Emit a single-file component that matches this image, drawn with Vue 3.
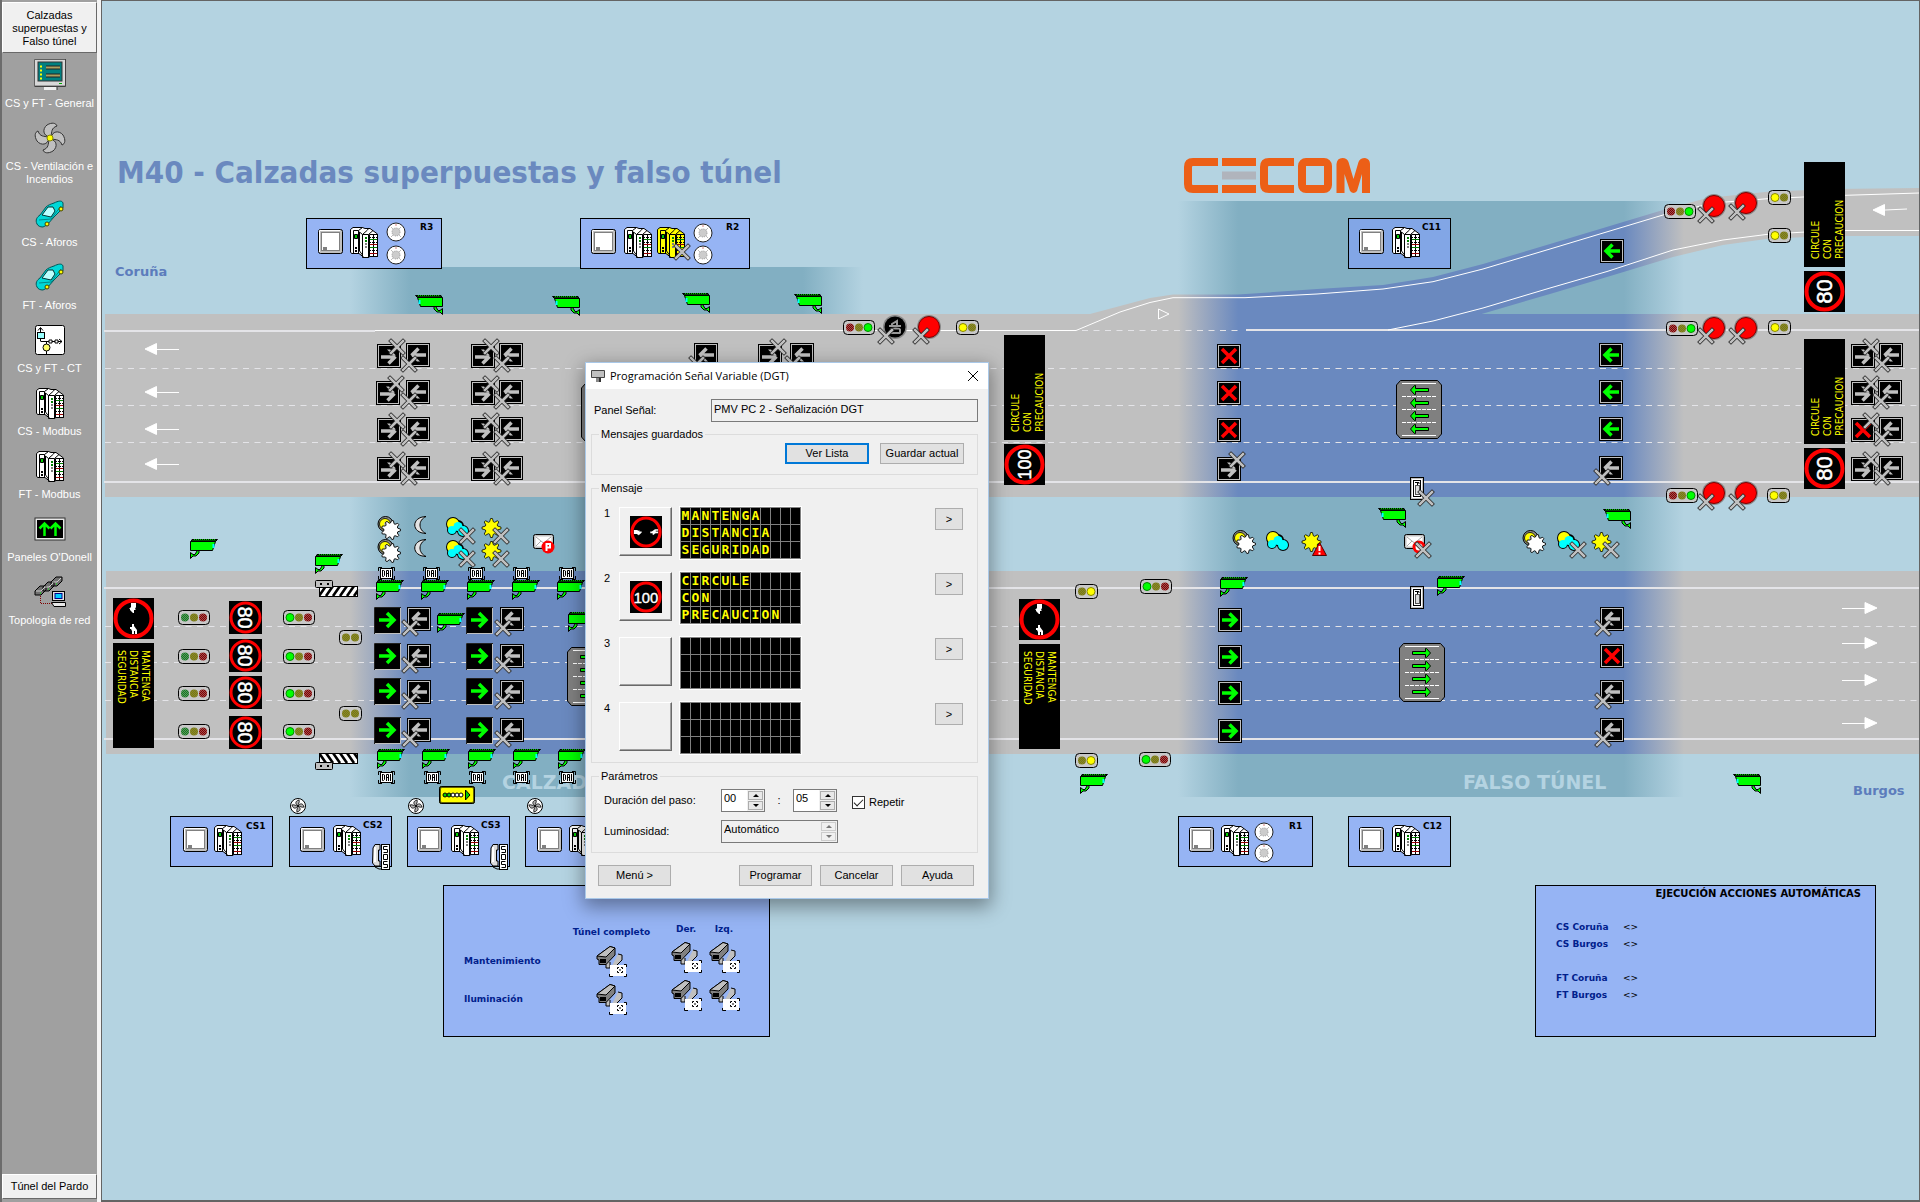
<script setup>
import { ref } from 'vue'

const menu = [
  { icon: 'm-monitor', label: 'CS y FT - General' },
  { icon: 'm-fan', label: 'CS - Ventilación e Incendios' },
  { icon: 'm-car', label: 'CS - Aforos' },
  { icon: 'm-car', label: 'FT - Aforos' },
  { icon: 'm-ct', label: 'CS y FT - CT' },
  { icon: 'm-plc', label: 'CS - Modbus' },
  { icon: 'm-plc', label: 'FT - Modbus' },
  { icon: 'm-arrows', label: "Paneles O'Donell" },
  { icon: 'm-net', label: 'Topología de red' },
]

function star(cx, cy, outer, inner, n) {
  const pts = []
  for (let i = 0; i < n * 4; i++) {
    const r = i % 4 < 2 ? outer : inner
    const a = ((i - 0.5) * Math.PI) / (n * 2)
    pts.push((cx + r * Math.cos(a)).toFixed(1) + ',' + (cy + r * Math.sin(a)).toFixed(1))
  }
  return pts.join(' ')
}

const place = (id, list) => list.map(([x, y]) => ({ id, x, y }))

const boxes = [
  { x: 306, y: 218, w: 135, name: 'R3', tx: 420, ty: 230 },
  { x: 580, y: 218, w: 169, name: 'R2', tx: 726, ty: 230 },
  { x: 1348, y: 218, w: 102, name: 'C11', tx: 1422, ty: 230, fill: '#82a6e6' },
  { x: 1178, y: 816, w: 134, name: 'R1', tx: 1289, ty: 829 },
  { x: 1348, y: 816, w: 102, name: 'C12', tx: 1423, ty: 829 },
  { x: 170, y: 816, w: 102, name: 'CS1', tx: 246, ty: 829 },
  { x: 289, y: 816, w: 102, name: 'CS2', tx: 363, ty: 828 },
  { x: 407, y: 816, w: 102, name: 'CS3', tx: 481, ty: 828 },
  { x: 525, y: 816, w: 102, name: '', tx: 600, ty: 828 },
]

const dashes = [368, 405, 442, 626, 662, 700]
const lines = [482, 588, 739]
const leftArrows = [349, 392, 429, 464]
const rightArrows = [608, 643, 680, 723]

const devices = [
  ...place('cabinet', [[318, 229], [591, 229], [1359, 229], [1189, 827], [1359, 827], [183, 827], [300, 827], [417, 827], [537, 827]]),
  ...place('plc', [[350, 227], [624, 227], [1392, 227], [1221, 825], [1392, 825], [214, 825], [333, 825], [451, 825], [569, 825]]),
  ...place('plc-y', [[657, 227]]),
  ...place('speaker', [[396, 232], [396, 255], [703, 233], [703, 255], [1264, 832], [1264, 853]]),
  ...place('sos', [[372, 844], [490, 844]]),
  ...place('fan', [[298, 806], [416, 806], [535, 806]]),
  ...place('dai', [[378, 567], [423, 567], [468, 567], [513, 567], [559, 567], [378, 771], [424, 771], [469, 771], [513, 771], [559, 771]]),
  ...place('cam-l', [[415, 294], [552, 295], [682, 292], [794, 293], [1378, 507], [1603, 508], [1733, 773]]),
  ...place('cam-r', [[190, 538], [315, 553], [376, 579], [421, 579], [467, 579], [512, 579], [557, 579], [437, 612], [568, 611],
    [377, 748], [422, 748], [468, 748], [513, 748], [558, 748], [1220, 576], [1437, 575], [1080, 773]]),
  ...place('t-gyr', [[178, 610], [178, 649], [178, 686], [178, 724]]),
  ...place('t-Gyr', [[283, 610], [283, 649], [283, 686], [283, 724], [1140, 579], [1139, 752]]),
  ...place('t-ryG', [[843, 320], [1664, 204], [1666, 321], [1666, 488]]),
  ...place('t-yy', [[339, 630], [339, 706]]),
  ...place('t-Yy', [[956, 320], [1768, 190], [1768, 228], [1768, 320], [1767, 488]]),
  ...place('t-yY', [[1075, 584], [1075, 753]]),
  ...place('disc', [[929, 327], [1714, 206], [1746, 203], [1714, 328], [1746, 328], [1714, 493], [1746, 493]]),
  ...place('disc40', [[895, 327]]),
  ...place('off-r', [[377, 344], [376, 381], [377, 418], [377, 457], [471, 344], [471, 381], [471, 418], [471, 457], [758, 344], [1217, 457],
    [1851, 344], [1851, 381], [1851, 457]]),
  ...place('stop', [[1217, 344], [1217, 381], [1217, 418], [1851, 418], [1600, 644]]),
  ...place('off-l', [[406, 343], [406, 380], [406, 417], [406, 456], [499, 343], [499, 380], [499, 417], [499, 456], [694, 343], [790, 343],
    [407, 607], [407, 644], [407, 680], [407, 718], [500, 607], [500, 644], [500, 680], [500, 718],
    [1599, 456], [1879, 343], [1878, 380], [1879, 417], [1879, 456], [1600, 607], [1600, 680], [1600, 718]]),
  ...place('go-l', [[1600, 239], [1599, 343], [1599, 380], [1599, 417]]),
  ...place('go-r', [[1218, 608], [1218, 645], [1218, 681], [1218, 719]]),
  ...place('go-big', [[374, 607], [374, 643], [374, 678], [374, 717], [466, 607], [466, 643], [466, 678], [466, 717]]),
  ...place('lanes-l', [[1396, 380], [581, 383]]),
  ...place('lanes-r', [[1399, 643], [567, 647]]),
  ...place('ext', [[1410, 477], [1410, 586]]),
  ...place('w-cog', [[377, 516], [377, 539], [1232, 530], [1522, 530]]),
  ...place('w-moon', [[414, 516], [414, 539]]),
  ...place('w-cloud', [[446, 517], [446, 540], [1266, 531], [1557, 531]]),
  ...place('w-sun', [[482, 518], [482, 541], [1302, 532], [1592, 532]]),
  ...place('warn', [[1312, 542]]),
  ...place('mail', [[533, 534], [1404, 534]]),
  ...place('mail-p', [[548, 547]]),
  ...place('mail-no', [[1419, 547]]),
  ...place('gate', [[319, 586]]),
  ...place('gate-b', [[319, 753]]),
  ...place('gate-box', [[315, 580], [315, 762]]),
  ...place('queue', [[439, 786]]),
  ...place('cross', [[682, 252], [886, 336], [921, 336], [1706, 215], [1737, 212], [1706, 336], [1737, 336], [1706, 502], [1737, 502],
    [1426, 498], [1423, 550], [1578, 550], [1611, 550], [467, 536], [467, 559], [501, 536], [501, 559], [1871, 421]]),
]

const up = ['CIRCULE', 'CON', 'PRECAUCION']
const down = ['MANTENGA', 'DISTANCIA', 'SEGURIDAD']
const upPanels = [
  { x: 1004, y: 335, speed: '100', size: 18, base: 27 },
  { x: 1804, y: 162, speed: '80', size: 22, base: 28 },
  { x: 1804, y: 339, speed: '80', size: 22, base: 28 },
]
const downPanels = [{ x: 113, y: 598 }, { x: 1019, y: 599 }]
const speeds = [601, 639, 676, 716]

const scenarios = ['Mantenimiento', 'Iluminación']
const actions = [['CS Coruña', 'CS Burgos'], ['FT Coruña', 'FT Burgos']]

const blank = ['', '', '']
const messages = [
  { sign: 'cars', lines: down },
  { sign: '100', lines: up },
  { sign: '', lines: blank },
  { sign: '', lines: blank },
]

const panelName = ref('PMV PC 2 - Señalización DGT')
const minutes = ref('00')
const seconds = ref('05')
const repeat = ref(true)
const brightness = ref('Automático')
</script>

<template>
  <div class="shell">
    <nav class="side">
      <button class="tab">Calzadas superpuestas y Falso túnel</button>
      <a v-for="m in menu" :key="m.label" class="entry" href="#">
        <svg width="32" height="32"><use :href="'#' + m.icon" /></svg>
        <span>{{ m.label }}</span>
      </a>
      <button class="tab last">Túnel del Pardo</button>
    </nav>

    <main class="stage">
      <svg class="scheme" width="100%" height="100%">
        <defs>
          <linearGradient id="fadeA" gradientUnits="userSpaceOnUse" x1="350" x2="863" y1="0" y2="0">
            <stop offset="0" stop-color="#82afc2" stop-opacity="0" /><stop offset=".117" stop-color="#82afc2" />
            <stop offset=".883" stop-color="#82afc2" /><stop offset="1" stop-color="#82afc2" stop-opacity="0" />
          </linearGradient>
          <linearGradient id="fadeB" gradientUnits="userSpaceOnUse" x1="1178" x2="1684" y1="0" y2="0">
            <stop offset="0" stop-color="#82afc2" stop-opacity="0" /><stop offset=".119" stop-color="#82afc2" />
            <stop offset=".881" stop-color="#82afc2" /><stop offset="1" stop-color="#82afc2" stop-opacity="0" />
          </linearGradient>
          <linearGradient id="roadA" gradientUnits="userSpaceOnUse" x1="350" x2="863" y1="0" y2="0">
            <stop offset="0" stop-color="#c0c0c0" /><stop offset=".117" stop-color="#6a89bf" />
            <stop offset=".883" stop-color="#6a89bf" /><stop offset="1" stop-color="#c0c0c0" />
          </linearGradient>
          <linearGradient id="roadB" gradientUnits="userSpaceOnUse" x1="1178" x2="1684" y1="0" y2="0">
            <stop offset="0" stop-color="#c0c0c0" /><stop offset=".119" stop-color="#6a89bf" />
            <stop offset=".881" stop-color="#6a89bf" /><stop offset="1" stop-color="#c0c0c0" />
          </linearGradient>
          <pattern id="dimR" width="2" height="2" patternUnits="userSpaceOnUse"><rect width="2" height="2" fill="#a05050" /><path d="M0 0h1v1h-1zM1 1h1v1h-1z" fill="#800000" /></pattern>
          <pattern id="dimY" width="2" height="2" patternUnits="userSpaceOnUse"><rect width="2" height="2" fill="#808040" /><path d="M0 0h1v1h-1zM1 1h1v1h-1z" fill="#808000" /></pattern>
          <pattern id="dimG" width="2" height="2" patternUnits="userSpaceOnUse"><rect width="2" height="2" fill="#609060" /><path d="M0 0h1v1h-1zM1 1h1v1h-1z" fill="#108020" /></pattern>
          <pattern id="hatch" width="7" height="10" patternUnits="userSpaceOnUse"><rect width="7" height="10" fill="#fff" /><path d="M0 10L7 0M-7 10L0 0M7 10L14 0" stroke="#000" stroke-width="2.6" /></pattern>
          <pattern id="hatchB" width="7" height="10" patternUnits="userSpaceOnUse"><rect width="7" height="10" fill="#fff" /><path d="M0 0L7 10M-7 0L0 10M7 0L14 10" stroke="#000" stroke-width="2.6" /></pattern>

          <g id="cross">
            <path d="M-6 -6L6 6M6 -6L-6 6" stroke="#222" stroke-width="4" stroke-linecap="square" />
            <path d="M-6 -6L6 6M6 -6L-6 6" stroke="#c0c0c0" stroke-width="2.5" stroke-linecap="square" />
          </g>
          <g id="face"><rect width="24" height="24" fill="#000" /><rect x="1.5" y="1.5" width="21" height="21" fill="none" stroke="#c0c0c0" /></g>
          <path id="arr" d="M4 12H18M11.500 5.500L18 12L11.500 18.500" fill="none" stroke-width="3.5" />
          <g id="go-r"><use href="#face" /><use href="#arr" stroke="#0f0" /></g>
          <g id="go-l"><use href="#face" /><use href="#arr" stroke="#0f0" transform="matrix(-1 0 0 1 24 0)" /></g>
          <g id="go-big"><rect width="27" height="27" fill="#000" /><rect x=".5" y=".5" width="26" height="26" fill="none" stroke="#c0c0c0" /><path d="M.5 27V.5H27" fill="none" stroke="#222" /><path d="M5 13H20M13 6L20 13L13 20" fill="none" stroke="#0f0" stroke-width="3.5" /></g>
          <g id="off-r"><use href="#face" /><path d="M4 13H18M18.500 12.500L11.500 19.500" fill="none" stroke="#c0c0c0" stroke-width="3.500" /><path d="M10 5.500h3l6 6h-3" fill="#c0c0c0" /><use href="#cross" x="20" y="3" /></g>
          <g id="off-l"><use href="#face" /><path d="M20 12H6M5.500 12.500L12.500 5.500" fill="none" stroke="#c0c0c0" stroke-width="3.500" /><path d="M14 18.500h-3l-6 -6h3" fill="#c0c0c0" /><use href="#cross" x="3" y="21" /></g>
          <g id="stop"><use href="#face" /><path d="M5 5L19 19M19 5L5 19" stroke="red" stroke-width="3.500" /></g>

          <g id="cam-r" stroke="#000">
            <path d="M9 13V15L6 18H3L.5 20.500V14.500L3 16.500H5L7 13" fill="#0f0" />
            <path d="M.5 3.500H25.500L22.500 12.500H.5z" fill="#0f0" />
            <path d="M2 1.500H27.500L25.500 3.500H1z" fill="#004000" />
            <path d="M4 1.500H26" stroke="#0c0" stroke-dasharray="1 1" />
            <path d="M23.500 6V10" stroke="#0ff" stroke-width="2" />
          </g>
          <g id="cam-l"><use href="#cam-r" transform="matrix(-1 0 0 1 28 0)" /></g>

          <g id="dai">
            <path d="M.5 4V.5H4M13 .5H16.500V4M.5 9V12.500H4M13 12.500H16.500V9" fill="none" stroke="#000" />
            <rect x="2.500" y="1.500" width="12" height="10" fill="#fff" stroke="#000" />
            <path d="M4.500 3V9.500H5.500L6.500 8.500V4L5.500 3.500H4.500M8.500 10V3.500H10.500V10M8.500 6.500H10.500M12.500 3V10" fill="none" stroke="#000" />
          </g>

          <g id="tl3"><rect x=".5" y=".5" width="31" height="14" rx="4" fill="#c8c8c8" stroke="#000" /></g>
          <g id="tl2"><rect x=".5" y=".5" width="22" height="14" rx="4" fill="#c8c8c8" stroke="#000" /></g>
          <g id="t-gyr"><use href="#tl3" /><circle cx="7" cy="7.500" r="4" fill="url(#dimG)" /><circle cx="16" cy="7.500" r="4" fill="url(#dimY)" /><circle cx="25" cy="7.500" r="4" fill="url(#dimR)" /></g>
          <g id="t-Gyr"><use href="#tl3" /><circle cx="7" cy="7.500" r="4" fill="#0f0" stroke="#080" /><circle cx="16" cy="7.500" r="4" fill="url(#dimY)" /><circle cx="25" cy="7.500" r="4" fill="url(#dimR)" /></g>
          <g id="t-ryG"><use href="#tl3" /><circle cx="7" cy="7.500" r="4" fill="url(#dimR)" /><circle cx="16" cy="7.500" r="4" fill="url(#dimY)" /><circle cx="25" cy="7.500" r="4" fill="#0f0" stroke="#080" /></g>
          <g id="t-yy"><use href="#tl2" /><circle cx="7" cy="7.500" r="4" fill="url(#dimY)" /><circle cx="16" cy="7.500" r="4" fill="url(#dimY)" /></g>
          <g id="t-Yy"><use href="#tl2" /><circle cx="7" cy="7.500" r="4" fill="#ff0" stroke="#880" /><circle cx="16" cy="7.500" r="4" fill="url(#dimY)" /></g>
          <g id="t-yY"><use href="#tl2" /><circle cx="7" cy="7.500" r="4" fill="url(#dimY)" /><circle cx="16" cy="7.500" r="4" fill="#ff0" stroke="#880" /></g>

          <g id="disc"><circle r="12" fill="#888" /><circle r="10.500" fill="red" stroke="#800000" /></g>
          <g id="disc40"><circle r="12" fill="#888" /><circle r="10.500" fill="#000" /><path d="M-4 6.500V2.500C-4 1 5 1 5 2.500V6.500M-6 -1H6M2 -1V-6L-3 -3V-1M-4 6H5" fill="none" stroke="#999" stroke-width="2" /></g>

          <g id="cabinet">
            <rect x=".5" y=".5" width="24" height="24" rx="2" fill="#c0c0c0" stroke="#000" />
            <path d="M1.500 23V1.500H22" fill="none" stroke="#fff" />
            <rect x="3.500" y="3.500" width="18" height="18" fill="#fff" stroke="#808080" />
            <rect x="5" y="18" width="4" height="3" fill="#808080" />
          </g>
          <g id="plcline" stroke="#000">
            <path d="M.5 2.500L3 .5H12.500L15 1.500L20 1.500L27.500 7V29.500H20L18 30.500H14L9 26.500H1.500L.5 25z" />
            <path d="M3.500 3.500H8.500V26.500H3.500zM12.500 7.500H18.500V30.500H12.500zM8.500 3.500L12.500 .5M12.500 7.500L17.500 3L18.500 1.500M18.500 7.500L23 3.500M12.500 7.500L9.500 5V24L12.500 28" fill="none" />
            <path d="M19.500 7.500H27.500V29.500H19.500zM23.500 7V29.500" fill="none" />
          </g>
          <g id="plcdots">
            <path d="M4.500 7.500H7.500V11.500H4.500z" fill="#0c0" stroke="#000" />
            <path d="M5 20h2v2h-2zM5 23h2v2h-2z" />
            <path d="M15 10h2v2h-2zM15 13h2v2h-2z" fill="#008000" /><path d="M15 16h2v2h-2zM15 19h2v2h-2z" fill="#808080" />
            <path d="M20 10.500H27M20 15.500H27M20 23.500H27" stroke="#000" stroke-dasharray="1 1" />
            <path d="M20 12.500H27M20 20.500H27" stroke="#008000" /><path d="M20 17.500H27M20 26.500H27" stroke="#900" />
          </g>
          <g id="plc"><use href="#plcline" fill="#fff" /><use href="#plcdots" /></g>
          <g id="plc-y"><use href="#plcline" fill="#ff0" /><use href="#plcdots" /></g>
          <g id="speaker">
            <circle r="9" fill="#fff" stroke="#222" />
            <circle r="4" fill="#ccc" stroke="#999" stroke-dasharray="1 1" /><path d="M-5 -5l2 2M5 5l-2 -2M5 -5l-2 2M-5 5l2 -2" stroke="#bbb" /><path d="M-.5 -7.500h1v1h-1z" fill="#a00" />
          </g>
          <g id="sos">
            <path d="M1 4L3 .5H8V6H6.500V17H8V22H3L.5 19z" fill="#ddd" stroke="#000" /><path d="M3 3V18" stroke="#fff" stroke-width="2" /><path d="M3 23l2 1 2 1h3" stroke="#000" fill="none" />
            <rect x="9.500" y=".5" width="8" height="25" fill="#fff" stroke="#000" />
            <path d="M15.500 2.500H11.500V5.500H15.500V8.500H11.500M11.500 10.500H15.500V15.500H11.500zM15.500 17.500H11.500V20.500H15.500V23.500H11.500" fill="none" stroke="#000" />
          </g>
          <g id="fan">
            <circle r="7.500" fill="#fff" stroke="#000" />
            <path d="M0 0C-3 -2 -3 -5 1 -6C2 -4 0 -2 0 0C2 -3 5 -3 6 1C4 2 2 0 0 0C3 2 3 5 -1 6C-2 4 0 2 0 0C-2 3 -5 3 -6 -1C-4 -2 -2 0 0 0" fill="#b0b0b0" stroke="#000" stroke-width=".8" />
          </g>
          <g id="ext">
            <rect x=".5" y=".5" width="13" height="22" fill="#fff" stroke="#000" /><rect x="1.500" y="1.500" width="11" height="20" fill="none" stroke="#c0c0c0" /><rect x="3.500" y="3.500" width="7" height="16" fill="#fff" stroke="#000" />
            <path d="M5 5.500H9V7M7.500 6V8" fill="none" stroke="#000" /><rect x="5.500" y="8.500" width="4" height="9" fill="#ddd" stroke="#555" />
          </g>
          <g id="lanebox">
            <path d="M4.500 .5H41.500L45.500 5V54L41.500 58.500H4.500L.5 54V5z" fill="#808080" stroke="#000" stroke-linejoin="round" />
            <path d="M6 3.500H40M6 55.500H40" stroke="#fff" /><path d="M6 16.500H40M6 29.500H40M6 42.500H40" stroke="#fff" stroke-dasharray="4 1" />
          </g>
          <g id="la" fill="#0f0" stroke="#000"><path d="M32.500 1.500V-1.500H19.500V-4.500H18.500L14.500 0L18.500 4.500H19.500V1.500z" /></g>
          <g id="lanes-l"><use href="#lanebox" /><use href="#la" y="10" /><use href="#la" y="23" /><use href="#la" y="36" /><use href="#la" y="49" /></g>
          <g id="lanes-r"><use href="#lanebox" /><g transform="matrix(-1 0 0 1 46 0)"><use href="#la" y="10" /><use href="#la" y="23" /><use href="#la" y="36" /><use href="#la" y="49" /></g></g>

          <g id="w-cog">
            <circle cx="8.500" cy="8" r="7.500" fill="#909090" stroke="#000" /><circle cx="8" cy="8" r="5.500" fill="#ff0" stroke="#000" stroke-width=".8" /><circle cx="9" cy="8" r="2" fill="#c0c0c0" />
            <polygon :points="star(14, 14, 9.5, 7, 9)" fill="#fff" stroke="#000" stroke-width=".9" />
          </g>
          <g id="w-moon"><path d="M12 .5C-3 1 -3 17 12 17.500C4 14 4 4 12 .5z" fill="#e4e4e4" stroke="#000" /></g>
          <g id="w-cloud">
            <g stroke="#000" stroke-width="2"><circle cx="7" cy="7" r="6" fill="#ff0" /><circle cx="12" cy="9" r="5" /><circle cx="6" cy="13" r="4" /><circle cx="17" cy="14" r="5" /></g>
            <circle cx="7" cy="7" r="6" fill="#ff0" /><g fill="#0ff"><circle cx="12" cy="9.500" r="4.500" /><circle cx="6" cy="13" r="4" /><circle cx="17" cy="14" r="5" /></g>
          </g>
          <g id="w-sun"><polygon :points="star(9.5, 10, 9.5, 6.5, 8)" fill="#ff0" stroke="#000" stroke-width=".8" /></g>
          <g id="warn"><path d="M7.500 .5L14.500 13.500H.5z" fill="red" stroke="#500" /><path d="M7.500 4V9M7.500 10.500V12.500" stroke="#fff" stroke-width="2" /></g>
          <g id="mail"><rect x=".5" y=".5" width="20" height="14" rx="2" fill="#c0c0c0" stroke="#000" /><rect x="2.500" y="2.500" width="16" height="10" fill="#fff" /><path d="M3 3L10.500 9L18 3M3 12L8 7M18 12L13 7" fill="none" stroke="#aaa" /></g>
          <g id="mail-p"><circle r="6.500" fill="red" /><path d="M-1.500 4V-3H2V.5H-1.500" fill="none" stroke="#fff" stroke-width="2" /></g>
          <g id="mail-no"><circle r="5" fill="#fff" stroke="red" stroke-width="3" /><path d="M-4 -4L4 4" stroke="red" stroke-width="2" /></g>
          <g id="gate"><rect x=".5" y=".5" width="38" height="10" fill="url(#hatch)" stroke="#000" /></g>
          <g id="gate-b"><rect x=".5" y=".5" width="38" height="10" fill="url(#hatchB)" stroke="#000" /></g>
          <g id="gate-box"><rect x=".5" y=".5" width="17" height="7" rx="1" fill="#c0c0c0" stroke="#000" /><path d="M5 3h2v2h-2zM12 3h2v2h-2z" /></g>
          <g id="queue">
            <rect x="1" y="1" width="34" height="16" rx="2" fill="#ff0" stroke="#606000" stroke-width="2" /><rect x=".5" y=".5" width="35" height="17" rx="2" fill="none" stroke="#000" />
            <g stroke="#000"><circle cx="6" cy="9" r="2" fill="#0c0" /><circle cx="10" cy="9" r="2" fill="#0c0" /><circle cx="14" cy="9" r="2" fill="#fff" /><circle cx="18" cy="9" r="2" fill="#fff" /><circle cx="22" cy="9" r="2" fill="#fff" /><path d="M26.500 4V14L31 9z" fill="#0c0" /></g>
          </g>
          <g id="ring"><rect width="41" height="41" fill="#000" /><circle cx="20.500" cy="20.500" r="18" fill="none" stroke="red" stroke-width="4" /></g>
          <g id="cars">
            <use href="#ring" />
            <path d="M5 18H9L11 19L12 18V20H15V21L12 24H11V25L9 23H5zM36 17H32L28 20H26V22H29V24H31V23L33 22H36V20H33V19H36z" fill="#fff" />
          </g>
          <g id="pancam">
            <path d="M22 8l4 1v5l-9 9l-2 -1" fill="#c0c0c0" stroke="#000" /><path d="M10 14v8l4 0v-6" fill="#c0c0c0" stroke="#000" />
            <path d="M1 10L14 .5L19 2V9L10 18.500H3V14L1 13z" fill="#808080" stroke="#000" /><path d="M1 10L14 .5L19 2L10 11z" fill="#c0c0c0" stroke="#000" /><path d="M4 13h6v4h-6z" />
            <rect x="14" y="19" width="16" height="11" fill="#fff" /><path d="M13.500 28V30.500H17M28 30.500H30.500V28M28 18.500H30.500V21" fill="none" stroke="#000" />
            <path d="M21.500 23V21.500H23M25 21.500H26.500V23M26.500 25V26.500H25M23 26.500H21.500V25M24 23v2" fill="none" stroke="#000" />
          </g>

          <g id="m-monitor">
            <rect x="1" y="1" width="30" height="25" fill="#d8d8d8" /><path d="M31.500 0V27.500H.5" fill="none" stroke="#404040" /><path d="M.5 27V.5H31" fill="none" stroke="#606060" />
            <rect x="4" y="3" width="24" height="19" fill="#008080" stroke="#333" /><path d="M6 7.500h2M6 11.500h2M6 15.500h2M6 19.500h2" stroke="#ff0" stroke-width="2" />
            <path d="M12 8.500H26M12 16.500H26" stroke="#222" stroke-width="4" /><path d="M12 8.500H26M12 16.500H26" stroke="#aaa060" stroke-width="2" /><path d="M25 24.500h3" stroke="#0a0" /><path d="M10 28h13v3h-13z" fill="#eee" /><path d="M23 28v3" stroke="#333" />
          </g>
          <g id="m-fan">
            <g fill="#c0c0c0" stroke="#333"><path d="M16 15C9 14 8 7 13 3C18 0 22 1 23 4C17 6 18 10 17 14z" /><path d="M17 16C18 9 25 8 29 13C32 18 31 22 28 23C26 17 22 18 18 17z" /><path d="M16 17C23 18 24 25 19 29C14 32 10 31 9 28C15 26 14 22 15 18z" /><path d="M15 16C14 23 7 24 3 19C0 14 1 10 4 9C6 15 10 14 14 15z" /></g>
            <circle cx="16" cy="16" r="3" fill="#ff0" stroke="#880" />
          </g>
          <g id="m-car">
            <path d="M3 26C1 22 3 19 6 17L12 9C14 7 17 6 20 5C24 3 28 2 29 5L29 10L26 13L20 19L13 27L9 29C6 29 4 28 3 26z" fill="#00d8d8" stroke="#005858" />
            <path d="M8 17L14 9H19L21 13L17 19z" fill="#bff" stroke="#033" /><path d="M5 22L17 21L27 8" fill="none" stroke="#088" /><circle cx="13" cy="26" r="2" fill="#ff0" stroke="#440" /><circle cx="27" cy="11" r="2" fill="#ff0" stroke="#440" />
          </g>
          <g id="m-ct">
            <rect x="1.500" y="1.500" width="29" height="29" rx="2" fill="#fff" stroke="#000" />
            <path d="M6.500 17V4M4 6.500L6.500 3.500L9 6.500M6.500 17.500H28M25 15L28 17.500L25 20" fill="none" stroke="#000" /><rect x="3.500" y="8.500" width="7" height="6" fill="#9ff" stroke="#000" /><circle cx="12.500" cy="23.500" r="3.500" fill="#ff6" stroke="#000" /><path d="M12.500 20V17M12.500 27v3" stroke="#000" /><path d="M15 16h3v3h-3zM21 16h3v3h-3z" fill="#fff" stroke="#000" />
          </g>
          <g id="m-plc"><use href="#plc" x="2" y="1" /></g>
          <g id="m-arrows"><rect x="1" y="5" width="30" height="22" fill="#e8e8e8" stroke="#333" /><rect x="3" y="7" width="26" height="18" fill="#000" /><path d="M10.500 23V11M5.500 15.500L10.500 10.500L15.500 15.500M21.500 23V11M16.500 15.500L21.500 10.500L26.500 15.500" fill="none" stroke="#0f0" stroke-width="2.500" /></g>
          <g id="m-net">
            <g fill="#707070" stroke="#000"><path d="M1 15l5-5h6v4l-5 5H1zM9 11l5-5h6v4l-5 5H9zM17 6l5-5h6v4l-5 5h-6z" /></g><path d="M2 15h5l4-4M10 11h5l4-4M18 6h5l4-4" fill="none" stroke="#ccc" /><path d="M6 17h1M14 13h1M22 8h1" stroke="#0f0" />
            <path d="M6.500 20V27.500H18" fill="none" stroke="#800000" stroke-dasharray="1 1" /><rect x="18.500" y="15.500" width="12" height="9" fill="#e0e0e0" stroke="#000" /><rect x="21" y="17.500" width="7" height="5" fill="#0cf" stroke="#008" /><path d="M17.500 26.500H31.500V30.500H20z" fill="#e8e8e8" stroke="#000" />
          </g>
        </defs>

        <g transform="translate(-102 -1)">
          <path d="M350 267H863V797H350z" fill="url(#fadeA)" />
          <path d="M1178 201H1684V797H1178z" fill="url(#fadeB)" />

          <rect x="105" y="314" width="1814" height="183" fill="#c0c0c0" />
          <rect x="1178" y="314" width="741" height="183" fill="url(#roadB)" />
          <rect x="106" y="571" width="1072" height="183" fill="url(#roadA)" />
          <rect x="1178" y="571" width="741" height="183" fill="url(#roadB)" />
          <path
            d="M1070 314.500L1090 314L1150 298L1173 294.500H1238L1317 289L1383 285L1433 277L1483 264L1550 244L1663 210L1707 198L1770 191.500L1833 189L1919 188V236H1833L1770 238.500L1723 245L1673 257L1607 277L1550 294L1480 314.500z"
            fill="url(#roadB)" />

          <g fill="none" stroke="#e4e4e8" stroke-width="2">
            <path d="M104 331H375M1246 330H1919" />
            <path v-for="y in lines" :key="y" :d="`M104 ${y}H1919`" />
            <g stroke-width="1" stroke-dasharray="6 5.5">
              <path v-for="y in dashes" :key="y" :d="`M105 ${y}.5H1919`" />
              <path d="M1082 330.500H1240" />
            </g>
          </g>
          <g fill="none" stroke="#fff">
            <path d="M375 330.500H1076L1120 312L1150 302.500L1173 297.700H1245L1317 294L1383 289L1433 281.700L1483 269L1550 249L1663 215L1713 203L1770 198.500L1833 195.700L1919 193" />
            <path d="M1388 330L1433 321L1483 308L1550 288L1607 271.500L1673 250L1723 240L1770 234L1833 230.500H1919" />
            <path d="M1158.500 309V319L1169 314z" />
          </g>
          <g fill="#fff" stroke="#fff">
            <path v-for="y in leftArrows" :key="y" :d="`M145 ${y}L156.500 ${y - 5.5}V${y + 5.5}zM157 ${y}.500H179`" />
            <path v-for="y in rightArrows" :key="y" :d="`M1877 ${y}L1865 ${y - 5.5}V${y + 5.5}zM1842 ${y}.500H1865`" />
            <path d="M1873 210L1884.500 204.500V215.500zM1885 210L1907 209" />
          </g>

          <text class="title" x="117" y="183">M40 - Calzadas superpuestas y falso túnel</text>
          <text class="city" x="115" y="276">Coruña</text>
          <text class="city" x="1853" y="795">Burgos</text>
          <text class="zone" x="502" y="789">CALZADAS</text>
          <text class="zone" x="1463" y="789">FALSO TÚNEL</text>

          <g role="img" aria-label="CECOM" fill="none" stroke="#ec5f17" stroke-width="8">
            <path d="M1218 162H1193Q1188 162 1188 167V184Q1188 189 1193 189H1218M1222 162H1256M1222 189H1256" />
            <path d="M1222 175.500H1256" stroke="#b0b4bc" />
            <path d="M1294 162H1269Q1264 162 1264 167V184Q1264 189 1269 189H1294" />
            <rect x="1302" y="162" width="26" height="27" rx="4" />
            <path d="M1336.500 193V164Q1337 158 1342.500 158Q1347 158 1348.500 162L1353.500 179L1358.500 162Q1360 158 1365 158Q1370 159 1370 164V193H1362V174L1357 191Q1353.500 195 1350 191L1344.500 174V193z" fill="#ec5f17" stroke="none" />
          </g>

          <g v-for="b in boxes" :key="b.x + '-' + b.y">
            <rect :x="b.x + 0.5" :y="b.y + 0.5" :width="b.w" height="50" :fill="b.fill || '#96b4f4'" stroke="#000" />
            <text v-if="b.name" class="tag" :x="b.tx" :y="b.ty">{{ b.name }}</text>
          </g>

          <use v-for="(d, i) in devices" :key="i" :href="'#' + d.id" :x="d.x" :y="d.y" />

          <g v-for="p in upPanels" :key="p.x + '-' + p.y" :transform="`translate(${p.x} ${p.y})`">
            <rect width="41" height="105" fill="#000" />
            <g transform="translate(15 97) rotate(-90)">
              <text v-for="(t, i) in up" :key="t" class="led" x="0" :y="i * 12">{{ t }}</text>
            </g>
            <use href="#ring" y="109" />
            <text class="speed" :transform="`translate(${p.base} 129.500) rotate(-90)`" :font-size="p.size">{{ p.speed }}</text>
          </g>
          <g v-for="p in downPanels" :key="p.x" :transform="`translate(${p.x} ${p.y})`">
            <use href="#cars" transform="rotate(90 20.500 20.500)" />
            <rect y="45" width="41" height="105" fill="#000" />
            <g transform="translate(29 52) rotate(90)">
              <text v-for="(t, i) in down" :key="t" class="led" x="0" :y="i * 12">{{ t }}</text>
            </g>
          </g>
          <g v-for="y in speeds" :key="y" :transform="`translate(229 ${y})`">
            <rect width="33" height="33" fill="#000" />
            <circle cx="16.500" cy="16.500" r="14.500" fill="none" stroke="red" stroke-width="3" />
            <text class="speed" transform="translate(9 16.500) rotate(90)" font-size="20">80</text>
          </g>
        </g>
      </svg>

      <section class="card scen">
        <h2>ESCENARIOS DAI</h2>
        <table>
          <thead>
            <tr><td></td><th scope="col">Túnel completo</th><th scope="col">Der.</th><th scope="col">Izq.</th></tr>
          </thead>
          <tbody>
            <tr v-for="s in scenarios" :key="s">
              <th scope="row">{{ s }}</th>
              <td v-for="n in 3" :key="n"><svg width="31" height="31"><use href="#pancam" /></svg></td>
            </tr>
          </tbody>
        </table>
      </section>

      <section class="card auto">
        <h2>EJECUCIÓN ACCIONES AUTOMÁTICAS</h2>
        <dl v-for="(g, i) in actions" :key="i">
          <template v-for="a in g" :key="a"><dt>{{ a }}</dt><dd>&lt;&gt;</dd></template>
        </dl>
      </section>

      <form class="dialog" role="dialog" aria-labelledby="dlg-title" @submit.prevent>
        <header>
          <svg width="16" height="16"><path d="M1.500 2.500H14.500V9.500H1.500z" fill="#c0c0c0" stroke="#444" /><path d="M6 10h5v4h-5z" fill="#888" /><path d="M9 10h2v4h-2z" fill="#333" /></svg>
          <h1 id="dlg-title">Programación Señal Variable (DGT)</h1>
          <button type="button" class="close" aria-label="Cerrar"><svg width="12" height="12"><path d="M1 1L11 11M11 1L1 11" stroke="#000" /></svg></button>
        </header>
        <div class="body">
          <div class="line">
            <label for="panel">Panel Señal:</label>
            <input id="panel" v-model="panelName" class="panel" readonly />
          </div>

          <fieldset class="saved">
            <legend>Mensajes guardados</legend>
            <button type="button" class="btn focus">Ver Lista</button>
            <button type="button" class="btn">Guardar actual</button>
          </fieldset>

          <fieldset class="msgs">
            <legend>Mensaje</legend>
            <div v-for="(m, i) in messages" :key="i" class="msg">
              <span>{{ i + 1 }}</span>
              <button type="button" class="sign" :aria-label="'Señal ' + (i + 1)">
                <svg v-if="m.sign" width="32" height="32" viewBox="0 0 41 41">
                  <use v-if="m.sign === 'cars'" href="#cars" />
                  <template v-else><use href="#ring" /><text class="speed" x="20.500" y="28" font-size="19">{{ m.sign }}</text></template>
                </svg>
              </button>
              <div class="matrix">
                <template v-for="(l, r) in m.lines" :key="r">
                  <span v-for="c in 12" :key="c">{{ l[c - 1] || '' }}</span>
                </template>
              </div>
              <button type="button" class="btn more">&gt;</button>
            </div>
          </fieldset>

          <fieldset class="params">
            <legend>Parámetros</legend>
            <label for="mins">Duración del paso:</label>
            <div class="ctl">
              <div class="spin">
                <input id="mins" v-model="minutes" />
                <span><button type="button" aria-label="Más"></button><button type="button" aria-label="Menos" class="dn"></button></span>
              </div>
              <i>:</i>
              <div class="spin">
                <input v-model="seconds" aria-label="Segundos" />
                <span><button type="button" aria-label="Más"></button><button type="button" aria-label="Menos" class="dn"></button></span>
              </div>
              <label class="check"><input v-model="repeat" type="checkbox" />Repetir</label>
            </div>
            <label for="lum">Luminosidad:</label>
            <div class="ctl">
              <div class="spin wide">
                <input id="lum" v-model="brightness" readonly />
                <span><button type="button" aria-label="Más" disabled></button><button type="button" aria-label="Menos" class="dn" disabled></button></span>
              </div>
            </div>
          </fieldset>

          <footer>
            <button type="button" class="btn">Menú &gt;</button>
            <button type="button" class="btn push">Programar</button>
            <button type="button" class="btn">Cancelar</button>
            <button type="button" class="btn">Ayuda</button>
          </footer>
        </div>
      </form>
    </main>
  </div>
</template>

<style>
body { margin: 0; background: #f0f0f0; }
</style>

<style scoped>
* { box-sizing: border-box; }
button, input { font: inherit; color: inherit; margin: 0; }
.shell { display: flex; min-height: 100vh; font: 11px/13px "Liberation Sans", Arial, sans-serif; color: #000; }
.side {
  flex: none; width: 101px; display: flex; flex-direction: column; align-items: center; gap: 12px;
  background: #a0a0a0; border-left: 2px solid #6c6c6c; border-right: 4px solid #f4f4f4; padding: 2px 0 3px;
}
.tab { align-self: stretch; background: #f0f0f0; border: 1px solid; border-color: #fff #696969 #696969 #fff; padding: 6px 8px 4px; line-height: 13px; text-align: center; margin-bottom: -6px; }
.tab.last { margin: auto 0 0; padding: 5px 0; }
.entry { display: flex; flex-direction: column; align-items: center; gap: 6px; color: #fff; text-decoration: none; text-align: center; width: 92px; }
.entry svg { display: block; }

.stage { position: relative; flex: 1; min-width: 0; overflow: hidden; background: #b4d3e1; border: 1px solid #646464; border-bottom-width: 2px; }
.scheme { position: absolute; inset: 0; display: block; }
.title { font: bold 31px "DejaVu Sans Condensed", "DejaVu Sans", sans-serif; font-stretch: condensed; fill: #6a89bf; }
.city { font: bold 13px "DejaVu Sans", sans-serif; fill: #5c7cbc; }
.zone { font: bold 19px "DejaVu Sans", sans-serif; fill: #b4d3e1; }
.tag { font: bold 9px "DejaVu Sans", sans-serif; }
.led { font: 10px "DejaVu Sans Condensed", "DejaVu Sans", sans-serif; font-stretch: condensed; fill: #ff0; }
.speed { font-family: "Liberation Sans", sans-serif; fill: #fff; stroke: #fff; stroke-width: .5; text-anchor: middle; }

.card { position: absolute; background: #96b4f4; border: 1px solid #000; height: 152px; font: bold 9px/17px "DejaVu Sans", sans-serif; color: #00208c; }
.card h2 { margin: 0; font-size: 10px; line-height: 16px; color: #000; text-align: right; padding-right: 14px; }
.scen { left: 341px; top: 884px; width: 327px; }
.scen h2 { padding-right: 18px; }
.scen table { border-collapse: collapse; margin: 20px 0 0 20px; }
.scen td, .scen th { padding: 0; font-weight: bold; }
.scen thead { line-height: 20px; }
.scen tbody tr { height: 38px; }
.scen th[scope=row] { text-align: left; width: 100px; }
.scen th:nth-child(2) { width: 95px; }
.scen th:nth-child(3) { width: 46px; }
.scen th:nth-child(4) { width: 38px; }
.scen tr > :nth-child(3) { padding-left: 8px; }
.scen td { text-align: center; }
.scen tbody td:nth-child(n+3) { vertical-align: top; }
.scen thead th:nth-child(n+3) { line-height: 14px; vertical-align: top; }
.scen svg { display: block; margin: 0 auto; }
.auto { left: 1433px; top: 884px; width: 341px; }
.auto dl { display: grid; grid-template-columns: 67px 1fr; margin: 17px 0 0 20px; }
.auto dd { margin: 0; color: #000; font-weight: normal; }

.dialog { position: absolute; left: 483px; top: 361px; width: 404px; background: #f0f0f0; border: 1px solid #a9c8e8; box-shadow: 0 6px 18px 2px rgba(0, 0, 0, .38); }
header { display: flex; align-items: center; height: 26px; padding-left: 4px; background: #fff; }
header h1 { flex: 1; margin: 0 0 0 4px; font: 11px/16px "Open Sans", "Noto Sans", sans-serif; }
.close { border: 0; background: none; padding: 0; width: 30px; height: 26px; }
.close svg { display: block; margin: auto; }
.body { padding: 10px 10px 12px 5px; }
.line { display: flex; align-items: center; justify-content: space-between; padding-left: 3px; margin-bottom: 5px; }
.panel { width: 267px; height: 23px; padding: 0 2px 4px; border: 1px solid #7a7a7a; background: #f0f0f0; outline: 0; }
fieldset { margin: 0 0 6px; border: 1px solid #dcdcdc; padding: 0 13px 10px 12px; min-width: 0; }
legend { margin-left: -5px; padding: 0 2px; line-height: 14px; }
.saved { display: flex; justify-content: flex-end; gap: 11px; padding-top: 2px; }
.btn { height: 21px; width: 73px; padding: 0; background: #e1e1e1; border: 1px solid #adadad; text-align: center; }
.saved .btn { width: 84px; }
.btn.focus { border: 2px solid #0078d7; }
.msgs { display: flex; flex-direction: column; gap: 16px; padding-top: 12px; padding-bottom: 11px; }
.msg { display: flex; align-items: flex-start; height: 49px; }
.msg > span { width: 15px; }
.sign { width: 53px; height: 49px; padding: 0; background: #f0f0f0; border: 1px solid; border-color: #fff #696969 #696969 #fff; box-shadow: inset -1px -1px #a0a0a0; margin-right: 8px; }
.sign svg { display: block; margin: auto; }
.matrix { display: grid; grid-template-columns: repeat(12, 9px); grid-auto-rows: 16px; gap: 1px; background: #808080; border: 1px solid #808080; box-shadow: 0 0 0 1px #fff; }
.matrix span { background: #000; color: #ff0; font: bold 13px/16px "DejaVu Sans Mono", monospace; text-align: center; }
.more { width: 28px; height: 22px; margin: 1px 1px 0 auto; }
.params { display: grid; grid-template-columns: 117px 1fr; row-gap: 8px; align-items: center; padding-top: 6px; padding-bottom: 9px; margin-bottom: 12px; }
.ctl { display: flex; align-items: center; }
.ctl i { width: 28px; text-align: center; font-style: normal; }
.spin { display: flex; width: 44px; height: 23px; border: 1px solid #7a7a7a; background: #fff; }
.spin input { flex: 1; min-width: 0; border: 0; padding: 0 0 4px 2px; background: none; outline: 0; }
.spin.wide { width: 117px; background: #f0f0f0; }
.spin span { flex: none; width: 17px; display: flex; flex-direction: column; gap: 1px; padding: 1px; background: #f0f0f0; }
.spin button { position: relative; flex: 1; padding: 0; border: 1px solid #adadad; background: #e8e8e8; }
.spin button:disabled { color: #777; border-color: #ccc; background: #f0f0f0; }
.spin button::before { content: ""; display: block; width: 0; margin: auto; border: 3px solid transparent; border-top: 0; border-bottom-color: currentColor; }
.spin button.dn::before { border: 3px solid transparent; border-bottom: 0; border-top-color: currentColor; }
.check { display: flex; align-items: center; gap: 4px; margin: 4px 0 0 15px; }
.check input { appearance: none; width: 13px; height: 13px; border: 1px solid #333; background: #fff; display: grid; place-items: center; }
.check input:checked::before { content: ""; width: 8px; height: 4px; border: solid #222; border-width: 0 0 1px 1px; transform: rotate(-45deg); margin-bottom: 2px; }
footer { display: flex; gap: 8px; padding: 0 4px 0 7px; }
.push { margin-left: auto; }
</style>
